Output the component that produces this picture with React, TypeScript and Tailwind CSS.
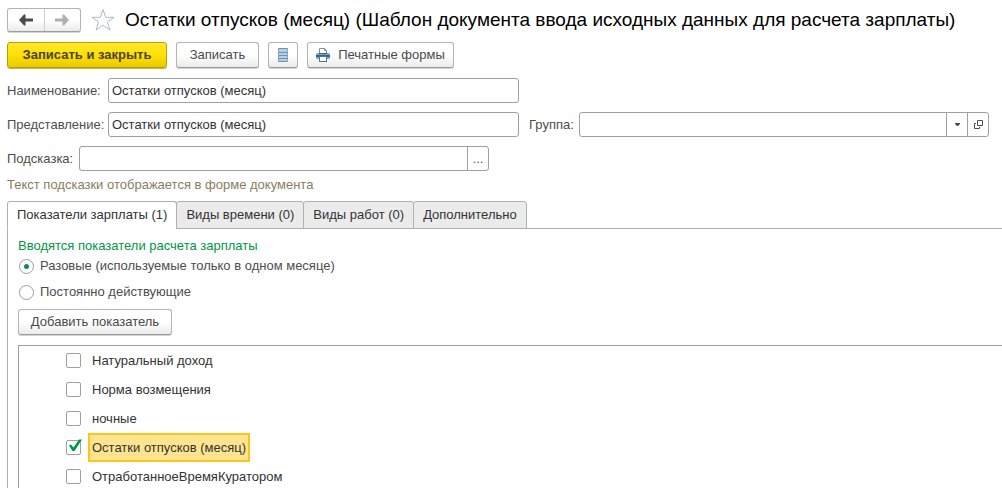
import { useState } from "react";
import type { ReactNode } from "react";

const tabs = ["Показатели зарплаты (1)", "Виды времени (0)", "Виды работ (0)", "Дополнительно"];

const indicators = [
  "Натуральный доход",
  "Норма возмещения",
  "ночные",
  "Остатки отпусков (месяц)",
  "ОтработанноеВремяКуратором",
];

const buttonLook =
  "rounded-[3px] border border-[#b3b3b3] border-b-[#9c9c9c] bg-linear-to-b from-white from-50% to-[#ebebeb] shadow-[0_1px_0_#d4d4d4]";

function ToolButton({ children, className = "", label }: { children: ReactNode; className?: string; label?: string }) {
  return (
    <button type="button" aria-label={label} className={`flex h-[26px] items-center justify-center text-[#4a4a4a] ${buttonLook} ${className}`}>
      {children}
    </button>
  );
}

function Field({ id, label, value = "", className = "", children }: { id: string; label: string; value?: string; className?: string; children?: ReactNode }) {
  return (
    <div className={`flex items-center ${className}`}>
      <label htmlFor={id} className="shrink-0 text-[#4d4d4d]">{label}</label>
      <div className="flex h-[25px] min-w-0 flex-1 overflow-hidden rounded-[3px] border border-[#a0a0a0]">
        <input id={id} type="text" defaultValue={value} className="min-w-0 flex-1 px-[3px] text-[#333333] outline-none" />
        {children}
      </div>
    </div>
  );
}

function FieldButton({ label, children }: { label: string; children: ReactNode }) {
  return (
    <button type="button" aria-label={label} className="flex w-[21px] shrink-0 items-center justify-center border-l border-[#a0a0a0] text-[#4d4d4d]">
      {children}
    </button>
  );
}

function Arrow({ flip = false }: { flip?: boolean }) {
  return (
    <svg width="14" height="12" viewBox="0 0 14 12" fill="currentColor" className={flip ? "rotate-180" : ""}>
      <path d="M0 6L5 .5H6.5V4.5H14V7.5H6.5V11.5H5Z" />
    </svg>
  );
}

function Radio({ label, checked = false, className = "" }: { label: string; checked?: boolean; className?: string }) {
  return (
    <label className={`flex items-center gap-[6px] text-[#4d4d4d] ${className}`}>
      <span className="grid h-[15px] w-[15px] place-items-center">
        <input type="radio" name="kind" defaultChecked={checked} className="peer col-start-1 row-start-1 h-[15px] w-[15px] appearance-none rounded-full border border-[#9c9c9c]" />
        <span className="pointer-events-none col-start-1 row-start-1 hidden h-[5px] w-[5px] rounded-full bg-[#009646] peer-checked:block" />
      </span>
      {label}
    </label>
  );
}

export default function App() {
  const [active, setActive] = useState(0);

  return (
    <main className="flex h-screen flex-col overflow-hidden bg-white pl-[7px] pt-2 font-['Liberation_Sans',Arial,sans-serif] text-[13px] leading-4">
      {/* title */}
      <header className="flex h-6 items-center">
        <div className={`flex h-6 w-[74px] shrink-0 ${buttonLook}`}>
          <button type="button" aria-label="Назад" className="flex flex-1 items-center justify-center border-r border-[#cfcfcf] text-[#4a4a4a]"><Arrow /></button>
          <button type="button" aria-label="Вперед" className="flex flex-1 items-center justify-center text-[#b0b0b0]"><Arrow flip /></button>
        </div>
        <button type="button" aria-label="В избранное" className="ml-[10px] mr-[10px] shrink-0">
          <svg width="24" height="24" viewBox="0 0 24 24" fill="none" stroke="#b4b8bf" strokeWidth="1">
            <path d="M12 1.5L14.7 9.3H23L16.4 14L18.9 22L12 17.2L5.1 22L7.6 14L1 9.3H9.3Z" />
          </svg>
        </button>
        <h1 className="whitespace-nowrap text-[19px] leading-6 text-black">
          Остатки отпусков (месяц) (Шаблон документа ввода исходных данных для расчета зарплаты)
        </h1>
      </header>

      {/* commands */}
      <div className="mt-[10px] flex gap-[9px]">
        <button type="button" className="h-[26px] w-[160px] rounded-[3px] border border-[#b8a000] bg-linear-to-b from-[#ffe827] via-[#ffe000] to-[#e8cb00] font-bold text-[#4a4536] shadow-[0_1px_0_#c9b640]">
          Записать и закрыть
        </button>
        <ToolButton className="w-[83px]">Записать</ToolButton>
        <ToolButton className="w-[30px]" label="Список">
          <svg width="10" height="14" viewBox="0 0 10 14">
            <rect width="10" height="14" fill="#b5d0e3" />
            <path d="M0 .5h10M0 4.5h10M0 7.5h10M0 10.5h10M0 13.5h10" stroke="#6d93ae" />
            <path d="M.5 0v14M9.5 0v14" stroke="#84a6be" />
          </svg>
        </ToolButton>
        <ToolButton className="w-[147px] gap-2">
          <svg width="14" height="14" viewBox="0 0 14 14" fill="none">
            <path d="M3.5 6V.5h5l2 2V6" fill="#fff" stroke="#7893a9" />
            <path d="M8.5 .5v2h2" stroke="#7893a9" />
            <rect y="5" width="14" height="6" rx="1.5" fill="#7fa6c4" />
            <path d="M0 7h14v2H0z" fill="#33628a" />
            <path d="M3 5h8v1H3z" fill="#33628a" />
            <rect x="3.5" y="8.5" width="7" height="5" fill="#fff" stroke="#4f7594" />
          </svg>
          Печатные формы
        </ToolButton>
      </div>

      {/* fields */}
      <div className="mt-[10px] grid grid-cols-[512fr_460fr] gap-x-[10px] gap-y-[9px] pr-[13px]">
        <Field id="name" label="Наименование:" value="Остатки отпусков (месяц)" className="[&>label]:w-[101px]" />
        <Field id="view" label="Представление:" value="Остатки отпусков (месяц)" className="col-start-1 [&>label]:w-[101px]" />
        <Field id="group" label="Группа:" className="[&>label]:w-[50px]">
          <FieldButton label="Выбрать">
            <svg width="5" height="3" viewBox="0 0 5 3" fill="currentColor"><path d="M0 0h5v1L3 3H2L0 1Z" /></svg>
          </FieldButton>
          <FieldButton label="Открыть">
            <svg width="9" height="9" viewBox="0 0 9 9" fill="none" stroke="currentColor">
              <path d="M3.5 .5h5v5h-5zM2 3.5H.5v5h5V7" />
            </svg>
          </FieldButton>
        </Field>
        <Field id="hint" label="Подсказка:" className="col-start-1 mr-[30px] [&>label]:w-[72px]">
          <FieldButton label="Изменить">...</FieldButton>
        </Field>
      </div>
      <p className="mt-[6px] text-[#8a7d60]">Текст подсказки отображается в форме документа</p>

      {/* tabs */}
      <div role="tablist" className="mt-2 flex h-7 shrink-0">
        {tabs.map((tab, i) => (
          <button
            key={tab}
            type="button"
            role="tab"
            aria-selected={i === active}
            onClick={() => setActive(i)}
            className={`-mr-px rounded-t-[3px] border border-[#b0b0b0] px-[9px] text-[#333333] ${i === active ? "border-b-white bg-white" : "bg-[#ebebeb]"}`}
          >
            {tab}
          </button>
        ))}
        <span className="flex-1 border-b border-[#b0b0b0]" />
      </div>
      <section className="flex min-h-0 flex-1 flex-col border-l border-[#b0b0b0] pl-[10px] pt-[9px]">
        <h2 className="text-[#009646]">Вводятся показатели расчета зарплаты</h2>
        <Radio label="Разовые (используемые только в одном месяце)" checked className="mt-1 pl-px" />
        <Radio label="Постоянно действующие" className="mt-[10px] pl-px" />
        <ToolButton className="mt-[9px] w-[154px] shrink-0">Добавить показатель</ToolButton>
        <ul className="mt-[10px] min-h-0 flex-1 overflow-hidden border-l border-t border-[#a0a0a0] pl-[47px] text-[#333333]">
          {indicators.map((name) => (
            <li key={name} className="h-[29px]">
              <label className="flex h-[29px] w-max items-center">
                <span className="grid h-[15px] w-[15px]">
                  <input type="checkbox" defaultChecked={name === indicators[3]} className="peer col-start-1 row-start-1 h-[15px] w-[15px] appearance-none rounded-[2px] border border-[#a0a0a0]" />
                  <svg width="15" height="15" viewBox="0 0 15 15" fill="#009646" className="pointer-events-none col-start-1 row-start-1 hidden overflow-visible peer-checked:block">
                    <path d="M3 5.5L5 4.5L7.5 7.5L13 -.5H16L8.5 11H6.5Z" />
                  </svg>
                </span>
                <span className={`ml-[7px] flex h-[29px] items-center border-2 px-[2px] ${name === indicators[3] ? "border-[#fac51c] bg-[#ffe48f]" : "border-transparent"}`}>
                  {name}
                </span>
              </label>
            </li>
          ))}
        </ul>
      </section>
    </main>
  );
}
